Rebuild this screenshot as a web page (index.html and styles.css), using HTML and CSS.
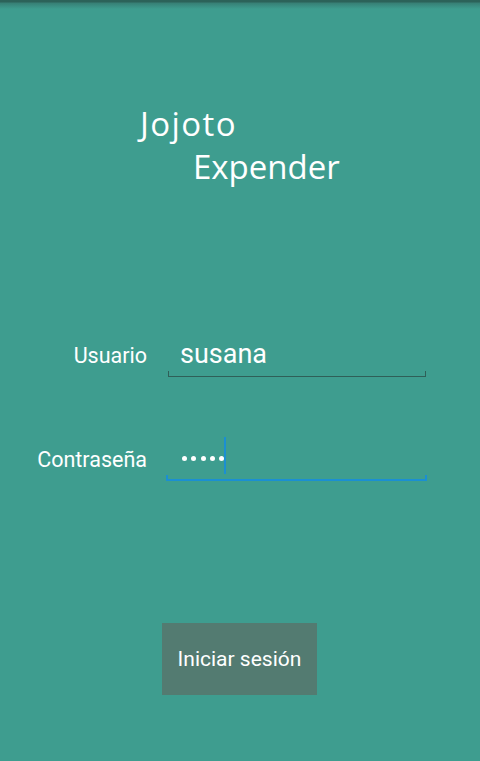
FILE: index.html
```html
<!DOCTYPE html>
<html lang="es">
<head>
<meta charset="utf-8">
<title>Jojoto Expender</title>
<link rel="stylesheet" href="styles.css">
</head>
<body>
<div class="screen">
  <div class="topshade"></div>
  <div class="title">
    <div class="title-line first">Jojoto</div>
    <div class="title-line second">Expender</div>
  </div>
  <div class="form">
    <div class="row">
      <div class="label">Usuario</div>
      <div class="field">
        <span class="value">susana</span>
      </div>
    </div>
    <div class="row">
      <div class="label">Contraseña</div>
      <div class="field focused">
        <div class="dots">
          <span class="dot"></span><span class="dot"></span><span class="dot"></span><span class="dot"></span><span class="dot"></span><span class="cursor"></span>
        </div>
      </div>
    </div>
  </div>
  <div class="actions">
    <div class="button">Iniciar sesión</div>
  </div>
</div>
</body>
</html>
```

FILE: styles.css
```css
html, body {
  margin: 0;
  padding: 0;
  background: #3e9d8f;
}
.screen {
  position: relative;
  width: 480px;
  height: 761px;
  background: #3e9d8f;
  overflow: hidden;
  padding-top: 102px;
  box-sizing: border-box;
}
.topshade {
  position: absolute;
  left: 0;
  top: 0;
  width: 100%;
  height: 9px;
  background: linear-gradient(to bottom, #2c6259 0px, #2c6259 2px, #377f75 3px, rgba(62,157,143,0) 9px);
}
.title {
  font-family: "Open Sans", "DejaVu Sans", sans-serif;
  font-size: 33px;
  line-height: 43px;
  color: #ffffff;
}
.title-line.first {
  padding-left: 140px;
  letter-spacing: 1.4px;
}
.title-line.second {
  padding-left: 193px;
}
.form {
  margin-top: 141px;
  display: flex;
  flex-direction: column;
  gap: 56px;
}
.row {
  display: flex;
  align-items: flex-end;
  height: 48px;
}
.label {
  width: 147px;
  text-align: right;
  font-family: Roboto, "Liberation Sans", sans-serif;
  font-size: 21.5px;
  line-height: 32px;
  color: #ffffff;
  padding-bottom: 5px;
}
.field {
  position: relative;
  margin-left: 19px;
  width: 261px;
  height: 48px;
  box-sizing: border-box;
  padding: 0 0 7px 14px;
  display: flex;
  align-items: flex-end;
  font-family: Roboto, "Liberation Sans", sans-serif;
  font-size: 27px;
  line-height: 32px;
  color: #ffffff;
}
.field::after {
  content: "";
  position: absolute;
  left: 2px;
  right: 1px;
  bottom: 0;
  height: 5px;
  border: 1px solid #2f5f58;
  border-top: none;
}
.field.focused {
  padding-left: 16px;
}
.field.focused::after {
  left: 0;
  right: 0;
  height: 4px;
  border: 2px solid #1b8fd2;
  border-top: none;
}
.dots {
  display: flex;
  align-items: center;
  height: 32px;
}
.dot {
  width: 5px;
  height: 5px;
  border-radius: 50%;
  background: #ffffff;
  margin-right: 4.3px;
}
.dot:nth-child(5) {
  margin-right: 0;
}
.cursor {
  align-self: flex-end;
  width: 2px;
  height: 37px;
  background: #1b8fd2;
}
.actions {
  margin-top: 142px;
  padding-left: 162px;
}
.button {
  width: 155px;
  height: 72px;
  background: #537b71;
  color: #ffffff;
  font-family: Roboto, "Liberation Sans", sans-serif;
  font-size: 21px;
  display: flex;
  align-items: center;
  justify-content: center;
}
```
